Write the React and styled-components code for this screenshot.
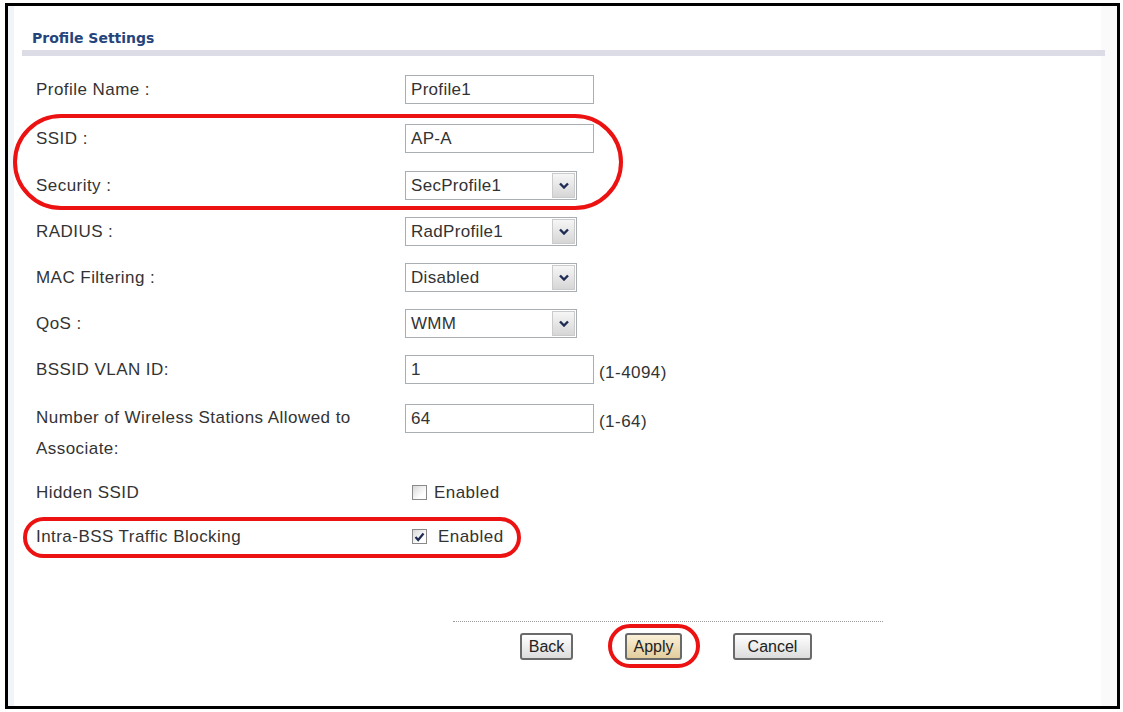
import styled, { createGlobalStyle } from "styled-components";

const GlobalStyle = createGlobalStyle`
  html, body {
    margin: 0;
    padding: 0;
    background: #fff;
  }
  body {
    font-family: "Liberation Sans", Arial, sans-serif;
  }
`;

const Frame = styled.div`
  box-sizing: border-box;
  margin: 3px 0 0 5px;
  width: 1115px;
  height: 706px;
  border: 3px solid #000;
  background: linear-gradient(
    to right,
    #f1f5f8 0,
    #f1f5f8 6px,
    #fff 6px,
    #fff calc(100% - 16px),
    #fafafa calc(100% - 16px)
  );
`;

const Heading = styled.h2`
  margin: 0;
  padding: 24px 0 0 24px;
  font-family: "DejaVu Sans", Tahoma, sans-serif;
  font-size: 14px;
  line-height: 16px;
  font-weight: bold;
  color: #24447c;
`;

const HeadingBar = styled.div`
  margin: 4px 12px 0 14px;
  height: 6px;
  background: #dcdce6;
`;

const Form = styled.div`
  padding: 19px 0 0 28px;
  display: flex;
  flex-direction: column;
`;

const Row = styled.div`
  display: grid;
  grid-template-columns: 369px 1fr;
  align-items: ${(p) => (p.$top ? "start" : "center")};
  min-height: 29px;
  margin-top: ${(p) => p.$gap || 0}px;
`;

const Label = styled.div`
  font-size: 17px;
  letter-spacing: 0.45px;
  line-height: ${(p) => p.$lh || 20}px;
  color: #333;
  white-space: pre-line;
`;

const Field = styled.div`
  display: flex;
  align-items: center;
  gap: 5px;
  margin-top: ${(p) => p.$shift || 0}px;
`;

const TextBox = styled.div`
  box-sizing: border-box;
  width: 189px;
  height: 29px;
  border: 1px solid #a9aeb3;
  background: #fff;
  padding: 0 5px;
  font-size: 17px;
  letter-spacing: 0.3px;
  line-height: 27px;
  color: #333;
`;

const Hint = styled.span`
  font-size: 17px;
  letter-spacing: 0.45px;
  color: #333;
  padding-top: 6px;
`;

const SelectBox = styled.div`
  box-sizing: border-box;
  width: 172px;
  height: 29px;
  border: 1px solid #a9aeb3;
  background: #fff;
  display: flex;
  align-items: center;
  justify-content: space-between;
  padding: 0 1px 0 5px;
  font-size: 17px;
  letter-spacing: 0.3px;
  color: #333;
`;

const ArrowBtn = styled.span`
  box-sizing: border-box;
  width: 23px;
  height: 25px;
  border: 1px solid #c9cbcd;
  background: linear-gradient(#f6f6f6, #d6d6d6);
  display: flex;
  align-items: center;
  justify-content: center;
`;

const CheckItem = styled.label`
  display: flex;
  align-items: center;
  gap: ${(p) => p.$gap || 7}px;
  margin-left: 7px;
  font-size: 17px;
  letter-spacing: 0.45px;
  color: #333;
`;

const Box = styled.span`
  box-sizing: border-box;
  width: 15px;
  height: 15px;
  border: 1px solid #8a8a8a;
  background: linear-gradient(135deg, #d8d8d8, #fff 70%);
  display: flex;
  align-items: center;
  justify-content: center;
`;

const Marked = styled.div`
  position: relative;
  display: flex;
  flex-direction: column;
  gap: ${(p) => p.$gap || 0}px;
  margin-top: ${(p) => p.$mt || 0}px;
  margin-left: ${(p) => p.$ml || 0}px;

  &::after {
    content: "";
    position: absolute;
    left: ${(p) => p.$ring.left}px;
    top: ${(p) => p.$ring.top}px;
    width: ${(p) => p.$ring.w}px;
    height: ${(p) => p.$ring.h}px;
    box-sizing: border-box;
    border: 4px solid #ec1212;
    border-radius: ${(p) => p.$ring.r}px;
    pointer-events: none;
  }
`;

const Footer = styled.div`
  margin: 70px 0 0 445px;
  width: 430px;
  border-top: 1px dotted #9a9a9a;
  padding: 11px 0 0 67px;
  box-sizing: border-box;
  display: flex;
  align-items: center;
`;

const Button = styled.button`
  box-sizing: border-box;
  height: 27px;
  width: ${(p) => p.$w}px;
  margin-left: ${(p) => p.$ml || 0}px;
  padding: 0;
  border: 2px solid #6a6a6a;
  border-radius: 3px;
  background: ${(p) =>
    p.$primary
      ? "linear-gradient(#fbf1d8, #e2cd9c)"
      : "linear-gradient(#ffffff, #dcdcdc)"};
  font-family: "Liberation Sans", Arial, sans-serif;
  font-size: 16px;
  color: #222;
`;

const Chevron = () => (
  <svg width="10" height="7" viewBox="0 0 10 7">
    <path d="M1 1.5 L5 5.5 L9 1.5" fill="none" stroke="#1e2b52" strokeWidth="2.4" />
  </svg>
);

const Tick = () => (
  <svg width="11" height="10" viewBox="0 0 11 10">
    <path d="M1.5 5 L4.2 8 L9.5 1.5" fill="none" stroke="#1e2b52" strokeWidth="2.2" />
  </svg>
);

const Select = ({ value }) => (
  <SelectBox>
    <span>{value}</span>
    <ArrowBtn>
      <Chevron />
    </ArrowBtn>
  </SelectBox>
);

const Check = ({ checked, gap }) => (
  <CheckItem $gap={gap}>
    <Box>{checked ? <Tick /> : null}</Box>
    Enabled
  </CheckItem>
);

const App = () => (
  <>
    <GlobalStyle />
    <Frame>
      <Heading>Profile Settings</Heading>
      <HeadingBar />
      <Form>
        <Row>
          <Label>Profile Name :</Label>
          <TextBox>Profile1</TextBox>
        </Row>

        <Marked $mt={20} $gap={18} $ring={{ left: -23, top: -10, w: 610, h: 96, r: 48 }}>
          <Row>
            <Label>SSID :</Label>
            <TextBox>AP-A</TextBox>
          </Row>
          <Row>
            <Label>Security :</Label>
            <Select value="SecProfile1" />
          </Row>
        </Marked>

        <Row $gap={17}>
          <Label>RADIUS :</Label>
          <Select value="RadProfile1" />
        </Row>
        <Row $gap={17}>
          <Label>MAC Filtering :</Label>
          <Select value="Disabled" />
        </Row>
        <Row $gap={17}>
          <Label>QoS :</Label>
          <Select value="WMM" />
        </Row>
        <Row $gap={17}>
          <Label>BSSID VLAN ID:</Label>
          <Field>
            <TextBox>1</TextBox>
            <Hint>(1-4094)</Hint>
          </Field>
        </Row>
        <Row $gap={18} $top>
          <Label $lh={31}>{"Number of Wireless Stations Allowed to\nAssociate:"}</Label>
          <Field $shift={2}>
            <TextBox>64</TextBox>
            <Hint>(1-64)</Hint>
          </Field>
        </Row>
        <Row $gap={14}>
          <Label>Hidden SSID</Label>
          <Check />
        </Row>

        <Marked $mt={15} $ring={{ left: -13, top: -5, w: 498, h: 41, r: 21 }}>
          <Row>
            <Label>Intra-BSS Traffic Blocking</Label>
            <Check checked gap={11} />
          </Row>
        </Marked>
      </Form>

      <Footer>
        <Button $w={53}>Back</Button>
        <Marked $ml={52} $ring={{ left: -17, top: -9, w: 92, h: 44, r: 22 }}>
          <Button $w={57} $primary>
            Apply
          </Button>
        </Marked>
        <Button $w={79} $ml={51}>
          Cancel
        </Button>
      </Footer>
    </Frame>
  </>
);

export default App;
